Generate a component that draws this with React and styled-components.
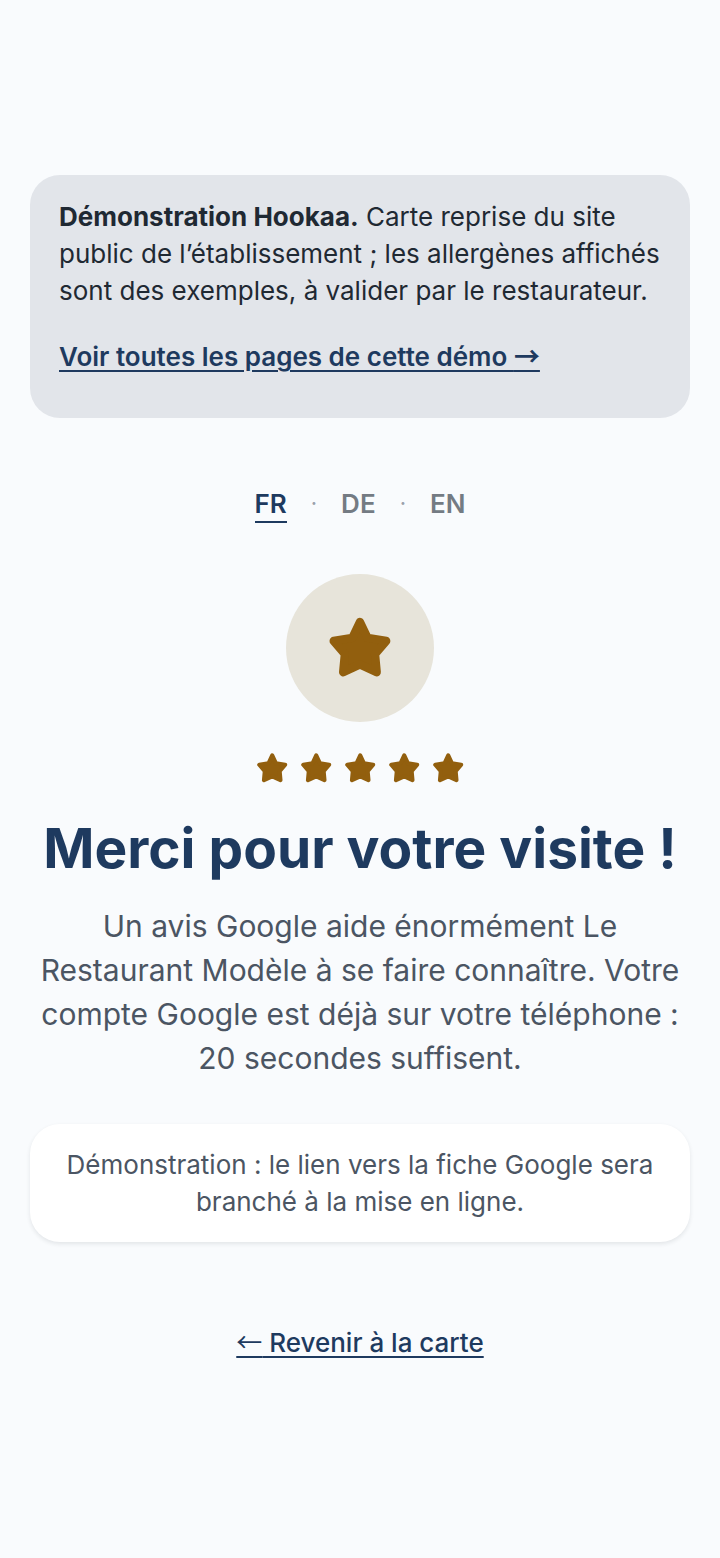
import React from "react"
import styled, { createGlobalStyle } from "styled-components"

const languages = ["FR", "DE", "EN"]

const GlobalStyle = createGlobalStyle`
  * {
    box-sizing: border-box;
  }
  body {
    margin: 0;
    background: #f9fbfd;
    color: #1f2933;
    font-family: Inter, "Liberation Sans", sans-serif;
  }
`

const Page = styled.main`
  display: flex;
  flex-direction: column;
  align-items: center;
  min-height: 100vh;
  padding: 175px 30px;
  text-align: center;
`

const DemoNotice = styled.aside`
  width: 100%;
  padding: 23px 29px 43px;
  border-radius: 30px;
  background: #e2e5ea;
  font-size: 26px;
  line-height: 37px;
  text-align: left;
`

const NoticeText = styled.p`
  margin: 0 0 29px;
`

const TextLink = styled.a`
  color: #1e3a5f;
  font-size: 26px;
  font-weight: ${({ $weight }) => $weight};
  line-height: 37px;
  text-decoration: underline;
  text-decoration-thickness: 2px;
  text-underline-offset: 4px;
`

const Arrow = styled.span`
  font-family: "Noto Sans CJK JP", sans-serif;
  font-weight: ${({ $bold }) => ($bold ? 700 : 400)};
  line-height: 1;
`

const LangNav = styled.nav`
  display: flex;
  align-items: center;
  gap: 24px;
  margin-top: 68px;
  color: #9aa1ab;
  font-size: 26px;
  line-height: 36px;
`

const Dot = styled.span`
  font-size: 22px;
  line-height: 32px;
  padding-bottom: 4px;
`

const LangLink = styled.a`
  border-bottom: 2px solid ${({ $active }) => ($active ? "#1e3a5f" : "transparent")};
  color: ${({ $active }) => ($active ? "#1e3a5f" : "#747b83")};
  font-weight: 600;
  line-height: 35px;
  text-decoration: none;
`

const Medal = styled.div`
  display: flex;
  align-items: center;
  justify-content: center;
  width: 148px;
  height: 148px;
  margin-top: 51px;
  border-radius: 50%;
  background: #e7e4da;
`

const Rating = styled.div`
  display: flex;
  gap: 11px;
  margin-top: 30px;
`

const StarSvg = styled.svg`
  display: block;
  fill: #925f0e;
  stroke: #925f0e;
  stroke-width: 3;
  stroke-linejoin: round;
`

const Title = styled.h1`
  margin: 28px 0 0;
  color: #1e3a5f;
  font-size: 55px;
  font-weight: 700;
  line-height: 70px;
`

const Lead = styled.p`
  margin: 21px 0 0;
  color: #4b5563;
  font-size: 30px;
  line-height: 44px;
`

const Card = styled.p`
  width: 100%;
  margin: 44px 0 82px;
  padding: 22px 29px;
  border-radius: 30px;
  background: #fff;
  box-shadow: 0 2px 4px rgba(31, 41, 51, 0.1);
  color: #4b5563;
  font-size: 26px;
  line-height: 37px;
`

const Star = ({ size }) => (
  <StarSvg width={size} height={size} viewBox="0 0 24 24" aria-hidden="true">
    <polygon points="11.8 2.5 14.5 8.2 21.2 9.3 17.2 14 17.8 20.5 11.8 17.7 5.8 20.5 6.4 14 2.4 9.3 9.1 8.2" />
  </StarSvg>
)

const App = () => (
  <>
    <GlobalStyle />
    <Page>
      <DemoNotice>
        <NoticeText>
          <strong>Démonstration Hookaa.</strong> Carte reprise du site public de
          l’établissement ; les allergènes affichés sont des exemples, à valider
          par le restaurateur.
        </NoticeText>
        <TextLink href="#pages" $weight={600}>
          Voir toutes les pages de cette démo <Arrow $bold>→</Arrow>
        </TextLink>
      </DemoNotice>
      <LangNav aria-label="Langue">
        {languages.map((lang, index) => (
          <React.Fragment key={lang}>
            {index > 0 && <Dot aria-hidden="true">·</Dot>}
            <LangLink href={`#${lang.toLowerCase()}`} $active={index === 0}>
              {lang}
            </LangLink>
          </React.Fragment>
        ))}
      </LangNav>
      <Medal>
        <Star size={67} />
      </Medal>
      <Rating role="img" aria-label="5 étoiles">
        {[1, 2, 3, 4, 5].map(n => (
          <Star key={n} size={33} />
        ))}
      </Rating>
      <Title>Merci pour votre visite !</Title>
      <Lead>
        Un avis Google aide énormément Le Restaurant Modèle à se faire
        connaître. Votre compte Google est déjà sur votre téléphone : 20
        secondes suffisent.
      </Lead>
      <Card>
        Démonstration : le lien vers la fiche Google sera branché à la mise en
        ligne.
      </Card>
      <TextLink href="#carte" $weight={500}>
        <Arrow>←</Arrow> Revenir à la carte
      </TextLink>
    </Page>
  </>
)

export default App
